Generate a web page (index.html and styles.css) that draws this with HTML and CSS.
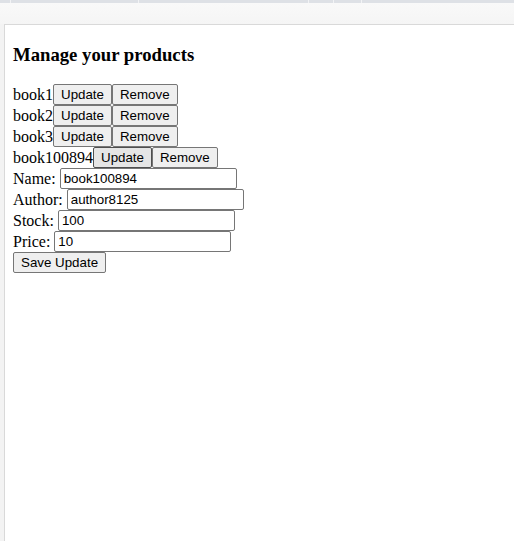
FILE: index.html
```html
<!DOCTYPE html>
<html>
<head>
<meta charset="utf-8">
<link rel="stylesheet" href="styles.css">
</head>
<body>
<div class="tabstrip">
  <span class="notch n1"></span><span class="notch n2"></span><span class="notch n3"></span><span class="notch n4"></span><span class="notch n5"></span>
</div>
<div class="toolbar"></div>
<div class="frame">
  <h3 class="title">Manage your products</h3>
  <div class="row">book1<button class="btn">Update</button><button class="btn">Remove</button></div>
  <div class="row">book2<button class="btn">Update</button><button class="btn">Remove</button></div>
  <div class="row">book3<button class="btn">Update</button><button class="btn">Remove</button></div>
  <div class="row">book100894<button class="btn btn-active">Update</button><button class="btn">Remove</button></div>
  <div class="row">Name: <input class="field" type="text" value="book100894"></div>
  <div class="row">Author: <input class="field" type="text" value="author8125"></div>
  <div class="row">Stock: <input class="field" type="text" value="100"></div>
  <div class="row">Price: <input class="field" type="text" value="10"></div>
  <div class="row"><button class="btn">Save Update</button></div>
</div>
</body>
</html>
```

FILE: styles.css
```css
html, body {
  margin: 0;
  height: 100%;
}
body {
  background: #f3f3f3;
  font-family: "Liberation Serif", "Times New Roman", serif;
  font-size: 16px;
  color: #000;
  display: flex;
  flex-direction: column;
  overflow: hidden;
}
.tabstrip {
  height: 3px;
  background: #dee1e6;
  display: flex;
  flex-shrink: 0;
}
.notch {
  width: 1px;
  height: 3px;
  background: #f2f3f5;
}
.n1 { margin-left: 10px; }
.n2 { margin-left: 127px; }
.n3 { margin-left: 169px; }
.n4 { margin-left: 24px; }
.n5 { margin-left: 27px; }
.toolbar {
  height: 21px;
  flex-shrink: 0;
  background: linear-gradient(#f9f9f9, #f5f5f5);
}
.frame {
  flex: 1;
  margin-left: 4px;
  border-top: 1px solid #d9d9d9;
  border-left: 1px solid #d9d9d9;
  background: #fff;
  padding: 0 8px;
}
.title {
  font-size: 18.72px;
  font-weight: bold;
  margin: 18.72px 0;
}
.row {
  height: 21px;
  line-height: 21px;
  white-space: nowrap;
}
.btn {
  font-family: "Liberation Sans", Arial, sans-serif;
  font-size: 13.333px;
  line-height: 17px;
  color: #000;
  background: #efefef;
  border: 1px solid #767676;
  border-radius: 2px;
  padding: 1px 7px;
  margin: 0;
  vertical-align: top;
}
.btn-active {
  background: #e5e5e5;
  border-color: #4f4f4f;
}
.field {
  font-family: "Liberation Sans", Arial, sans-serif;
  font-size: 13.333px;
  line-height: 17px;
  color: #000;
  border: 1px solid #767676;
  border-radius: 2px;
  padding: 1px 3px;
  margin: 0;
  width: 169px;
  vertical-align: top;
}
```
